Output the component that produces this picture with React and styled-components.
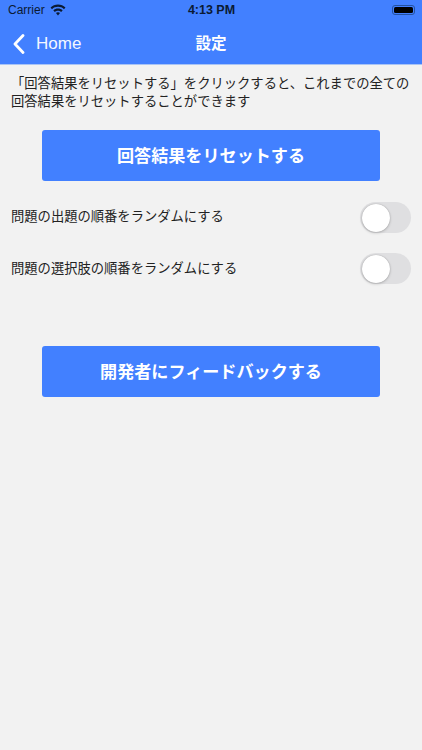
import React from 'react';
import styled, { createGlobalStyle } from 'styled-components';

const GlobalStyle = createGlobalStyle`
  html, body {
    margin: 0;
    padding: 0;
    background-color: #f2f2f2;
  }
  body {
    font-family: "Liberation Sans", "Noto Sans CJK JP", sans-serif;
  }
`;

const Page = styled.div`
  width: 422px;
  height: 750px;
  overflow: hidden;
  background-color: #f2f2f2;
`;

const Header = styled.header`
  height: 65px;
  background-color: #4280ff;
  border-bottom: 0.5px solid #a9c4f5;
  box-sizing: border-box;
`;

const StatusBar = styled.div`
  height: 20px;
  display: grid;
  grid-template-columns: 1fr auto 1fr;
  align-items: center;
  padding: 0 7px 0 8px;
  color: #0b1a33;
  font-size: 12px;
`;

const Carrier = styled.div`
  display: flex;
  align-items: center;
  gap: 5px;
`;

const Clock = styled.div`
  font-weight: 700;
  font-size: 12.5px;
`;

const Battery = styled.div`
  justify-self: end;
  width: 23px;
  height: 10px;
  box-sizing: border-box;
  padding: 1px;
  border: 1px solid #24529f;
  border-radius: 3px;
  &::before {
    content: '';
    display: block;
    height: 100%;
    background-color: #000;
    border-radius: 1.5px;
  }
`;

const NavBar = styled.div`
  height: 44px;
  display: grid;
  grid-template-columns: 1fr auto 1fr;
  align-items: center;
  color: #fff;
`;

const BackLink = styled.div`
  display: flex;
  align-items: center;
  gap: 11px;
  padding: 3px 0 0 13px;
  font-size: 17px;
  color: #f4f7ff;
`;

const Title = styled.div`
  font-size: 15.5px;
  font-weight: 700;
`;

const Content = styled.main`
  padding: 10px 11px 0;
  color: #222;
`;

const Description = styled.p`
  margin: 0;
  font-size: 13.3px;
  line-height: 18px;
`;

const ActionButton = styled.button`
  display: block;
  width: 338px;
  height: 51px;
  margin: ${(props) => props.$top}px 0 0 31px;
  padding: 0 0 3px;
  border: none;
  border-radius: 3px;
  background-color: #4280ff;
  color: #fff;
  font-family: inherit;
  font-size: 17.1px;
  font-weight: 700;
`;

const SettingRow = styled.div`
  height: 31px;
  margin-top: ${(props) => props.$top}px;
  display: flex;
  align-items: center;
  justify-content: space-between;
  font-size: 13.3px;
`;

const RowLabel = styled.span`
  padding-bottom: ${(props) => props.$lift}px;
`;

const Switch = styled.div`
  width: 51px;
  height: 31px;
  box-sizing: border-box;
  padding: 1.5px;
  border-radius: 16px;
  background-color: #dfdfe1;
  &::before {
    content: '';
    display: block;
    width: 28px;
    height: 28px;
    border-radius: 50%;
    background-color: #fff;
    box-shadow: 0 1px 3px rgba(0, 0, 0, 0.2), 0 0 1px rgba(0, 0, 0, 0.3);
  }
`;

function WifiIcon() {
  return (
    <svg width="16" height="12" viewBox="0 0 15 11">
      <path d="M7.5 0.4C4.8 0.4 2.4 1.4 0.5 3.1L1.9 4.7C3.4 3.3 5.4 2.5 7.5 2.5s4.1 0.8 5.6 2.2l1.4-1.6C12.6 1.4 10.2 0.4 7.5 0.4z" fill="#0b1a33" />
      <path d="M7.5 4.1C5.8 4.1 4.3 4.7 3.1 5.8L4.5 7.4C5.3 6.7 6.4 6.2 7.5 6.2s2.2 0.5 3 1.2l1.4-1.6C10.7 4.7 9.2 4.1 7.5 4.1z" fill="#0b1a33" />
      <path d="M7.5 7.7c-0.8 0-1.4 0.3-1.9 0.7l1.9 2.2 1.9-2.2C8.9 8 8.3 7.7 7.5 7.7z" fill="#0b1a33" />
    </svg>
  );
}

function BackIcon() {
  return (
    <svg width="12" height="20" viewBox="0 0 12 20">
      <path d="M10 1.5L2 10l8 8.5" fill="none" stroke="#fff" strokeWidth="2.8" strokeLinecap="round" strokeLinejoin="round" />
    </svg>
  );
}

function App() {
  return (
    <Page>
      <GlobalStyle />
      <Header>
        <StatusBar>
          <Carrier>
            Carrier
            <WifiIcon />
          </Carrier>
          <Clock>4:13 PM</Clock>
          <Battery />
        </StatusBar>
        <NavBar>
          <BackLink>
            <BackIcon />
            Home
          </BackLink>
          <Title>設定</Title>
        </NavBar>
      </Header>
      <Content>
        <Description>
          「回答結果をリセットする」をクリックすると、これまでの全ての回答結果をリセットすることができます
        </Description>
        <ActionButton $top={19}>回答結果をリセットする</ActionButton>
        <SettingRow $top={21}>
          <RowLabel $lift={4}>問題の出題の順番をランダムにする</RowLabel>
          <Switch />
        </SettingRow>
        <SettingRow $top={20}>
          <RowLabel $lift={2}>問題の選択肢の順番をランダムにする</RowLabel>
          <Switch />
        </SettingRow>
        <ActionButton $top={62}>開発者にフィードバックする</ActionButton>
      </Content>
    </Page>
  );
}

export default App;
